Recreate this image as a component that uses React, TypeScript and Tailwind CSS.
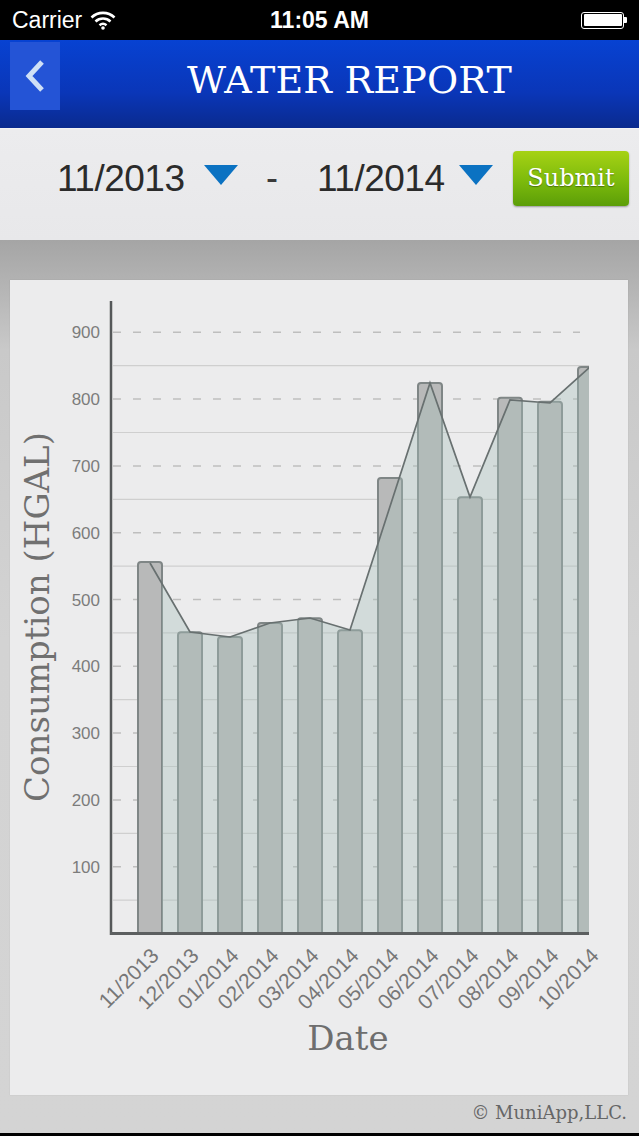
import React from "react";

const months = [
  { label: "11/2013", v: 556 },
  { label: "12/2013", v: 451 },
  { label: "01/2014", v: 444 },
  { label: "02/2014", v: 465 },
  { label: "03/2014", v: 472 },
  { label: "04/2014", v: 454 },
  { label: "05/2014", v: 682 },
  { label: "06/2014", v: 824 },
  { label: "07/2014", v: 653 },
  { label: "08/2014", v: 802 },
  { label: "09/2014", v: 796 },
  { label: "10/2014", v: 848 },
];

const Y0 = 933.5;
const K = 0.668;
const yOf = (v: number) => Y0 - v * K;

function Chart() {
  const bars = months.map((m, i) => {
    const x = 138 + i * 40;
    const top = yOf(m.v);
    const w = 24;
    const r = 3;
    const d = `M${x},933 L${x},${top + r} Q${x},${top} ${x + r},${top} L${x + w - r},${top} Q${x + w},${top} ${x + w},${top + r} L${x + w},933 Z`;
    return { d, cx: x + 12, top, label: m.label };
  });
  const linePts: [number, number][] = [
    [150, 563],
    [190, 632],
    [230, 637],
    [270, 623],
    [310, 618],
    [350, 630],
    [430, 383],
    [470, 497],
    [510, 400],
    [550, 403],
    [590, 367],
  ];
  const areaPts =
    "162,584 " +
    linePts
      .slice(1)
      .map((p) => p.join(","))
      .join(" ") +
    " 590,933 162,933";
  const solid = [50, 150, 250, 350, 450, 550, 650, 750, 850];
  const dashed = [100, 200, 300, 400, 500, 600, 700, 800, 900];
  return (
    <svg width={618} height={815} viewBox="10 280 618 815" className="block">
      <defs>
        <clipPath id="plot">
          <rect x={112} y={290} width={477} height={645} />
        </clipPath>
      </defs>
      <g clipPath="url(#plot)">
        {solid.map((v) => (
          <line key={v} x1={113} x2={589} y1={yOf(v)} y2={yOf(v)} stroke="#cfcfcf" strokeWidth={1.2} />
        ))}
        {dashed.map((v) => (
          <line
            key={v}
            x1={113}
            x2={580}
            y1={yOf(v)}
            y2={yOf(v)}
            stroke="#bebebe"
            strokeWidth={1.5}
            strokeDasharray="8 12"
          />
        ))}
        {bars.map((b, i) => (
          <path key={i} d={b.d} fill="#b8b9b9" stroke="#7f8686" strokeWidth={2} />
        ))}
        <polygon points={areaPts} fill="rgb(169,193,187)" fillOpacity={0.38} />
        <polyline
          points={linePts.map((p) => p.join(",")).join(" ")}
          fill="none"
          stroke="#687070"
          strokeWidth={1.7}
        />
      </g>
      <line x1={111} x2={111} y1={301} y2={935} stroke="#555859" strokeWidth={2.5} />
      <line x1={110} x2={589} y1={933.5} y2={933.5} stroke="#5c5f60" strokeWidth={3} />
      {[100, 200, 300, 400, 500, 600, 700, 800, 900].map((v) => (
        <text
          key={v}
          x={100}
          y={yOf(v) + 6}
          textAnchor="end"
          fontFamily='"Liberation Sans", Arial, sans-serif'
          fontSize={17}
          fill="#7c7c7c"
        >
          {v}
        </text>
      ))}
      {bars.map((b, i) => (
        <text
          key={i}
          x={b.cx + 10}
          y={957}
          textAnchor="end"
          transform={`rotate(-45 ${b.cx + 10} 957)`}
          fontFamily='"Liberation Sans", Arial, sans-serif'
          fontSize={21}
          fill="#777777"
        >
          {b.label}
        </text>
      ))}
      <text
        x={49}
        y={617}
        textAnchor="middle"
        transform="rotate(-90 49 617)"
        fontFamily='"DejaVu Serif", serif'
        fontSize={34}
        fill="#707070"
      >
        Consumption (HGAL)
      </text>
      <text
        x={348}
        y={1050}
        textAnchor="middle"
        fontFamily='"DejaVu Serif", serif'
        fontSize={34}
        fill="#6e6e6e"
      >
        Date
      </text>
    </svg>
  );
}

function Triangle() {
  return (
    <svg width={34} height={20} viewBox="0 0 34 20" className="block">
      <polygon points="0,0 34,0 17,20" fill="#0b72c2" />
    </svg>
  );
}

export default function App() {
  return (
    <div className="w-[639px] h-[1136px] flex flex-col overflow-hidden bg-[#d2d2d2]">
      {/* status bar */}
      <div className="h-[40px] bg-black flex items-center relative text-white font-['Liberation_Sans',Arial,sans-serif]">
        <span className="pl-[12px] text-[23px] leading-none">Carrier</span>
        <svg width={26} height={19} viewBox="0 0 26 19" className="ml-[8px] block">
          <path d="M1.5 6.5 A16.5 16.5 0 0 1 24.5 6.5" fill="none" stroke="#fff" strokeWidth={2.6} />
          <path d="M5.5 10.5 A11 11 0 0 1 20.5 10.5" fill="none" stroke="#fff" strokeWidth={2.6} />
          <path d="M9.5 14.2 A5.5 5.5 0 0 1 16.5 14.2" fill="none" stroke="#fff" strokeWidth={2.6} />
          <circle cx={13} cy={17} r={1.8} fill="#fff" />
        </svg>
        <span className="absolute left-0 right-0 text-center text-[23px] font-semibold leading-none pointer-events-none">
          11:05 AM
        </span>
        <div className="ml-auto mr-[12px] flex items-center">
          <div className="w-[43px] h-[17px] rounded-[3px] border-[1.5px] border-white p-[1.5px]">
            <div className="w-full h-full bg-white rounded-[1px]" />
          </div>
          <div className="w-[3px] h-[6px] bg-white rounded-r-[1px]" />
        </div>
      </div>
      {/* nav bar */}
      <div className="h-[88px] bg-[linear-gradient(to_bottom,#0742d2,#0a36b8_60%,#0a2a8e)] flex items-start relative">
        <div className="ml-[10px] mt-[2px] w-[50px] h-[68px] bg-[#2454d6] flex items-center justify-center">
          <svg width={24} height={34} viewBox="0 0 24 34" className="block">
            <polyline points="19,3 6,17 19,31" fill="none" stroke="#cfe0f6" strokeWidth={5} strokeLinejoin="miter" />
          </svg>
        </div>
        <div className="absolute left-[60px] right-0 top-0 h-[80px] flex items-center justify-center">
          <span className="text-white text-[38px] leading-none font-['DejaVu_Serif',serif] tracking-[0.2px]">
            WATER REPORT
          </span>
        </div>
      </div>
      {/* filter bar */}
      <div className="h-[112px] bg-[linear-gradient(to_bottom,#ececee,#e8e8ea)] border-t border-[#f2f2f4] flex items-center pb-[13px] pl-[57px] font-['Liberation_Sans',Arial,sans-serif]">
        <span className="text-[37px] leading-none tracking-[-0.5px] text-[#2b2b2b] w-[128px]">11/2013</span>
        <div className="ml-[19px] -mt-[6px]">
          <Triangle />
        </div>
        <span className="ml-[28px] text-[36px] leading-none text-[#3a3a3a]">-</span>
        <span className="ml-[39px] text-[37px] leading-none tracking-[-0.5px] text-[#2b2b2b] w-[128px]">11/2014</span>
        <div className="ml-[14px] -mt-[6px]">
          <Triangle />
        </div>
        <div className="ml-[20px] w-[116px] h-[55px] rounded-[4px] bg-[linear-gradient(to_bottom,#a6d214,#7cba0c_55%,#5c9e08)] shadow-[0_1px_2px_rgba(0,0,0,0.35)] flex items-center justify-center">
          <span className="text-white text-[24px] leading-none font-['DejaVu_Serif',serif] [text-shadow:0_1px_1px_rgba(0,0,0,0.35)]">
            Submit
          </span>
        </div>
      </div>
      {/* content */}
      <div className="flex-1 flex flex-col bg-[linear-gradient(to_bottom,#a5a5a5_0px,#b2b2b2_40px,#c9c9c9_110px,#d3d3d3_400px,#d4d4d4_100%)]">
        <div className="pt-[40px] px-[10px] pr-[11px]">
          <div className="w-[618px] h-[815px] bg-[#ececed] shadow-[0_0_1px_rgba(0,0,0,0.15)]">
            <Chart />
          </div>
        </div>
        <div className="h-[38px] flex items-center justify-end pr-[12px] pb-[2px]">
          <span className="text-[18px] leading-none text-[#666666] font-['DejaVu_Serif',serif]">© MuniApp,LLC.</span>
        </div>
      </div>
      <div className="h-[3px] bg-black" />
    </div>
  );
}
